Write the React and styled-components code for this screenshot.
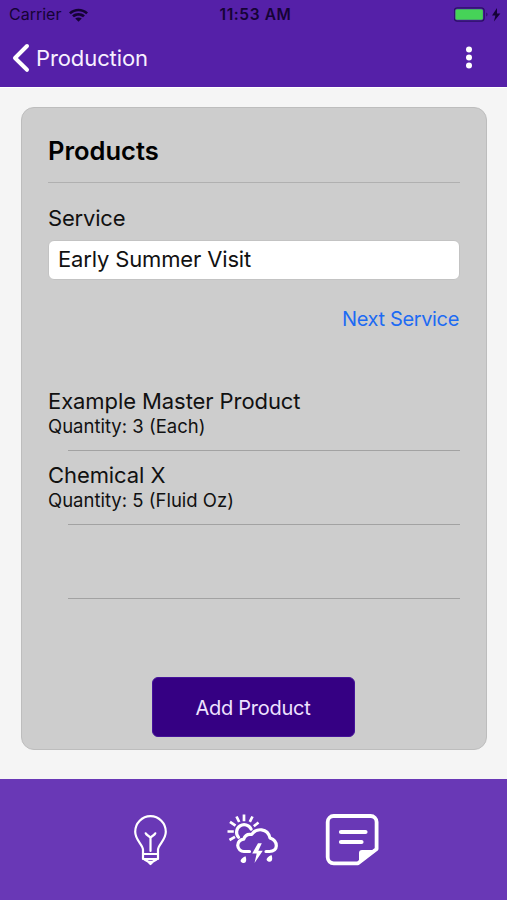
import React from "react";
import styled, { createGlobalStyle } from "styled-components";

const GlobalStyle = createGlobalStyle`
* {
  box-sizing: border-box;
}
body {
  margin: 0;
  font-family: Inter, "Liberation Sans", sans-serif;
  color: #111;
  background-color: #f5f5f5;
}
`
const Screen = styled.div`
display: flex;
flex-direction: column;
height: 900px;
overflow: hidden;
`
const Header = styled.header`
height: 87px;
background-color: #5520a8;
`
const StatusBar = styled.div`
display: grid;
grid-template-columns: 1fr auto 1fr;
align-items: center;
height: 29px;
padding: 0 5px 0 9px;
color: #150335;
`
const Carrier = styled.div`
display: flex;
align-items: center;
gap: 8px;
font-size: 16px;
line-height: 29px;
`
const Clock = styled.div`
padding-top: 1px;
font-size: 15.5px;
font-weight: 600;
line-height: 28px;
letter-spacing: 0.6px;
`
const Battery = styled.div`
display: flex;
justify-content: flex-end;
`
const NavBar = styled.div`
display: flex;
align-items: center;
justify-content: space-between;
height: 58px;
padding: 0 33px 0 12px;
`
const BackButton = styled.button`
display: flex;
align-items: center;
gap: 6px;
padding: 0;
border: 0;
background: none;
color: #f8f0ff;
font: inherit;
font-size: 22px;
line-height: 30px;
`
const Content = styled.main`
flex: 1;
padding: 19px 20px 29px 21px;
border-top: 1px solid #fff;
`
const Card = styled.section`
display: flex;
flex-direction: column;
height: 643px;
padding: 0 26px;
background-color: #cdcdcd;
border: 1px solid #bdbdbd;
border-radius: 13px;
`
const Title = styled.h1`
margin: 0;
padding-top: 28px;
height: 75px;
border-bottom: 1.5px solid #b0b0b0;
font-size: 25.5px;
font-weight: 600;
line-height: 30px;
color: #000;
`
const Label = styled.label`
margin-top: 20px;
font-size: 22px;
line-height: 30px;
`
const Field = styled.div`
height: 40px;
margin-top: 7px;
padding: 0 9px;
border: 1px solid #c3c3c3;
border-radius: 6px;
background-color: #fff;
font-size: 22px;
line-height: 36px;
`
const NextLink = styled.a`
align-self: flex-end;
margin: 24px 1px 0 0;
font-size: 20px;
line-height: 30px;
color: #1d6bf3;
`
const List = styled.ul`
margin: 43px 0 0;
padding: 0;
list-style: none;
`
const Item = styled.li`
height: 74px;
background: linear-gradient(#a2a2a2, #a2a2a2) 20px 100% / 100% 1px no-repeat;
`
const Name = styled.div`
padding-top: 11px;
font-size: 22px;
line-height: 26px;
letter-spacing: -0.08px;
`
const Quantity = styled.div`
font-size: 18.5px;
line-height: 24px;
`
const AddButton = styled.button`
align-self: center;
width: 203px;
height: 60px;
margin: auto 2px 12px 0;
padding-top: 3px;
border: 1px solid #45139a;
border-radius: 6px;
background-color: #350083;
color: #eee2ff;
font: inherit;
font-size: 20px;
letter-spacing: -0.25px;
`
const Footer = styled.footer`
display: flex;
justify-content: center;
gap: 40px;
height: 121px;
padding: 31px 8px 0 0;
background-color: #6938b6;
`
const Icon = styled.svg`
display: block;
fill: none;
stroke: #fff;
stroke-linecap: round;
stroke-linejoin: round;
`
const StatusIcon = styled(Icon)`
fill: #150335;
stroke: none;
`
const Text = styled.span`
letter-spacing: ${(props) => props.$track || 0}px;
`

const products = [
  { name: "Example Master Product", quantity: "Quantity: 3 (Each)" },
  { name: "Chemical X", quantity: "Quantity: 5 (Fluid Oz)" },
  {},
];

function WifiIcon() {
  return (
    <StatusIcon width="19" height="14" viewBox="0 0 19 14">
      <path d="M0 4.5C5.4-.5 13.6-.5 19 4.500L17.200 6.300C12.800 2.300 6.200 2.300 1.800 6.300Z" />
      <path d="M3.100 7.500C6.800 4.300 12.200 4.300 15.900 7.500L14.100 9.300C11.400 7.100 7.600 7.100 4.900 9.300Z" />
      <path d="M6.200 10.600C8 9 11 9 12.800 10.600L9.500 13.800Z" />
    </StatusIcon>
  );
}

function BatteryIcon() {
  return (
    <Icon width="48" height="16" viewBox="0 0 48 16">
      <rect x=".2" y=".9" width="30" height="13.200" rx="3" stroke="#2b1065" strokeWidth="1.200" />
      <rect x="1.400" y="2.200" width="27.500" height="10.600" rx="1.500" fill="#46d358" stroke="none" />
      <path d="M32.300 5.500c1.600.7 1.600 3.400 0 4.100z" fill="#2b1065" stroke="none" />
      <path d="M43 1 38 8.400h3.400l-1.500 6 6.500-8H43z" fill="#150335" stroke="none" />
    </Icon>
  );
}

function BulbIcon() {
  return (
    <Icon width="60" height="60" viewBox="0 0 60 60" strokeWidth="2.2">
      <path d="M23 44v-4.200c0-5.300-7.800-9.300-7.800-18a15.300 15.600 0 0 1 30.600 0c0 8.700-7.800 12.700-7.800 18V44" />
      <path d="M23 44h15v5H23zM24.500 49.500l3.500 2 2.500 2.500 2.500-2.500 3.500-2M28.500 51.800h4" />
      <path d="M30.500 41V28M25.700 23.300c1 2.300 3 2 4.800 4.700 1.800-2.700 3.800-2.400 4.800-4.700" />
    </Icon>
  );
}

function WeatherIcon() {
  return (
    <Icon width="60" height="60" viewBox="0 1 60 60" strokeWidth="3.200">
      <path d="M18.500 28.300a7.600 7.600 0 1 1 12.600-8.200" />
      <path
        d="M7.500 22.500h6.300M9.500 31l5.500-3.200M10 12.800l5.500 3.800M16.500 7.500l2.700 5.500M24 5.500v6.800M32.500 7.500l-2.700 5.300M38.500 13.500l-4.700 3.800"
        strokeWidth="2.700"
        strokeLinecap="butt"
      />
      <path d="M29.500 42.500h-5.300a6.200 6.200 0 0 1-.5-12.400c1.300-3.700 4.300-5.400 8-4.600 4.500-7 16-6.500 18.300 3.500 8.500 3 8.500 13.500-.5 13.500H46" />
      <path d="m38 34.300-5.800 10.200h4.500L34.500 54l8.300-12.300h-4.500l3.500-7.400z" fill="#fff" stroke="none" />
      <path d="M25.500 47.200c-4.500 1.800-6.600 5.200-3.300 6.500 3.600 1.200 5-2 3.300-6.500zM51.500 46c-4.500 1.800-6.600 5.200-3.300 6.500 3.600 1.200 5-2 3.300-6.500z" fill="#fff" stroke="none" />
    </Icon>
  );
}

function NoteIcon() {
  return (
    <Icon width="60" height="60" viewBox="1 0 60 60" strokeWidth="3.800">
      <path d="M39 53.300H14.700a6 6 0 0 1-6-6V12a6 6 0 0 1 6-6H51.600a6 6 0 0 1 6 6v27z" />
      <path d="M40 54V43a3 3 0 0 1 3-3H58.500z" fill="#fff" stroke="none" />
      <path d="M22 22h24.500M22 32h20.500" strokeWidth="4.200" />
    </Icon>
  );
}

function App() {
  return (
    <Screen>
      <GlobalStyle />
      <Header>
        <StatusBar>
          <Carrier>
            Carrier
            <WifiIcon />
          </Carrier>
          <Clock>11:53 AM</Clock>
          <Battery>
            <BatteryIcon />
          </Battery>
        </StatusBar>
        <NavBar>
          <BackButton>
            <Icon width="18" height="30" viewBox="0 0 18 30" strokeWidth="4">
              <path d="M15 3 3 15l12 11.800" />
            </Icon>
            <Text $track={-0.1}>Production</Text>
          </BackButton>
          <Icon width="10" height="30" viewBox="0 0 10 30">
            <g fill="#fff" stroke="none">
              <circle cx="5" cy="6.500" r="3" />
              <circle cx="5" cy="14.500" r="3" />
              <circle cx="5" cy="22.500" r="3" />
            </g>
          </Icon>
        </NavBar>
      </Header>
      <Content>
        <Card>
          <Title>Products</Title>
          <Label><Text $track={-0.2}>Service</Text></Label>
          <Field><Text $track={-0.15}>Early Summer Visit</Text></Field>
          <NextLink><Text $track={-0.35}>Next Service</Text></NextLink>
          <List>
            {products.map((product, i) => (
              <Item key={i}>
                <Name>{product.name}</Name>
                <Quantity>{product.quantity}</Quantity>
              </Item>
            ))}
          </List>
          <AddButton>Add Product</AddButton>
        </Card>
      </Content>
      <Footer>
        <BulbIcon />
        <WeatherIcon />
        <NoteIcon />
      </Footer>
    </Screen>
  );
}

export default App;
